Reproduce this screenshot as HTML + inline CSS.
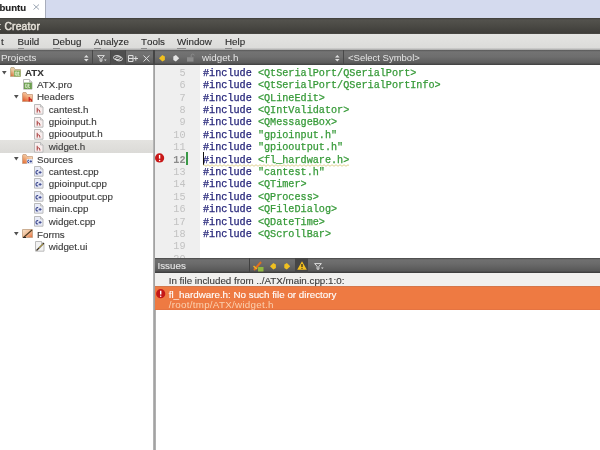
<!DOCTYPE html><html><head><meta charset="utf-8"><style>
*{margin:0;padding:0;box-sizing:border-box}
html,body{width:600px;height:450px;overflow:hidden;background:#fff;font-family:"Liberation Sans",sans-serif}
.a{position:absolute;white-space:pre}
body{will-change:transform}
svg{position:absolute;overflow:visible}
.mi{font-size:9.8px;color:#2c2c2c;top:36.3px;-webkit-text-stroke:0.12px #2c2c2c}
.mi u{text-decoration:none;position:relative}
.mi u:after{content:"";position:absolute;left:0;right:0;top:11.6px;height:1px;background:#8a8a8a}
.tr{font-size:9.8px;color:#3a3a3a;-webkit-text-stroke:0.12px #3a3a3a}
.code{font-family:"Liberation Mono",monospace;font-size:10.17px;-webkit-text-stroke:0.25px}
.ln{font-family:"Liberation Mono",monospace;font-size:10.17px;color:#c2c2c2;text-align:right;width:30.5px;left:0;top:2.7px;line-height:12.4px}
#code{left:48px;top:2.7px;line-height:12.4px}
.cur{color:#8c8c8c;font-weight:bold}
.kw{color:#25257a}
.st{color:#369a38}
.sep{position:absolute;width:1px;background:#4c4c4c;border-right:1px solid #7a7a7a}
</style></head><body>
<div class="a" style="left:0;top:0;width:600px;height:18px;background:#d4daee"></div>
<div class="a" style="left:0;top:0;width:45px;height:18px;background:#fff"></div>
<div class="a" style="left:45px;top:0;width:1.2px;height:18px;background:#a8adbb"></div>
<div class="a" style="left:-0.5px;top:2.2px;font-size:9.6px;font-weight:bold;color:#222;-webkit-text-stroke:0.15px #222">buntu</div>
<svg style="left:33px;top:4.3px" width="7" height="6"><path d="M0.5 0.5L6 5.5M6 0.5L0.5 5.5" stroke="#98a2b0" stroke-width="0.95"/></svg>
<div class="a" style="left:0;top:18px;width:600px;height:16px;background:linear-gradient(#3e3d39,#53524d 12%,#4a4944 50%,#3e3d39 95%,#55544f)"></div>
<div class="a" style="left:-2.6px;top:20.8px;font-size:10px;font-weight:bold;color:#e2ded6">t</div>
<div class="a" style="left:4.4px;top:20.8px;font-size:10.3px;letter-spacing:0.2px;color:#e6e2da;-webkit-text-stroke:0.45px #e6e2da">Creator</div>
<div class="a" style="left:0;top:34px;width:600px;height:16px;background:linear-gradient(#e4e4e2,#dcdcda 85%,#a8a8a8)"></div>
<div class="a mi" style="left:1px">t</div>
<div class="a mi" style="left:17.5px"><u>B</u>uild</div>
<div class="a mi" style="left:52.5px"><u>D</u>ebug</div>
<div class="a mi" style="left:94px"><u>A</u>nalyze</div>
<div class="a mi" style="left:141px"><u>T</u>ools</div>
<div class="a mi" style="left:177px"><u>W</u>indow</div>
<div class="a mi" style="left:225px"><u>H</u>elp</div>
<div class="a" style="left:0;top:50px;width:600px;height:15px;background:linear-gradient(#585858,#737373 12%,#6e6e6e 45%,#5c5c5c 85%,#3e3e3e)"></div>
<div class="a" style="left:1px;top:52.3px;font-size:9.8px;color:#e6e6e6">Projects</div>
<svg style="left:84px;top:54.8px" width="5" height="7"><path d="M2.3 0L4.6 2.4H0Z M2.3 6.4L4.6 4H0Z" fill="#e0e0e0"/></svg>
<div class="a" style="left:92px;top:50px;width:1px;height:15px;background:#484848"></div>
<div class="a" style="left:110px;top:50px;width:1px;height:15px;background:#484848"></div>
<div class="a" style="left:124.5px;top:50px;width:1px;height:15px;background:#484848"></div>
<div class="a" style="left:110.5px;top:50px;width:14px;height:15px;background:#4f4f4f"></div>
<svg style="left:96.5px;top:55px" width="10" height="7"><path d="M0.6 0.6H7.4L4.9 3.3V6.2H3.1V3.3Z" fill="none" stroke="#dedede" stroke-width="1"/><path d="M7 4.6H9.6L8.3 6Z" fill="#dedede"/></svg>
<svg style="left:113px;top:55.3px" width="10" height="7"><ellipse cx="4" cy="2.6" rx="3.5" ry="2.1" fill="none" stroke="#dedede" stroke-width="1"/><ellipse cx="6" cy="3.8" rx="3.4" ry="2.1" fill="none" stroke="#dedede" stroke-width="1"/></svg>
<svg style="left:127.5px;top:55.3px" width="10" height="7"><path d="M0.5 0.5H5V6.5H0.5Z M0.5 3.5H5" fill="none" stroke="#dedede" stroke-width="1"/><path d="M5.5 3.5H10 M7.8 1.3V5.7" stroke="#dedede" stroke-width="1"/></svg>
<svg style="left:143px;top:55.3px" width="7" height="7"><path d="M0.5 0.5L6.3 6.5M6.3 0.5L0.5 6.5" stroke="#dedede" stroke-width="1"/></svg>
<div class="a" style="left:153.4px;top:50px;width:1.3px;height:15px;background:#444"></div>
<svg style="left:158.6px;top:54.8px" width="7" height="7"><path d="M0 3.2L3.3 0L5.9 1.5V4.9L3.3 6.4Z" fill="#f0c020"/></svg>
<svg style="left:173px;top:54.8px" width="7" height="7"><path d="M6.2 3.2L2.9 0L0.3 1.5V4.9L2.9 6.4Z" fill="#e4e4e4"/></svg>
<svg style="left:187px;top:54.4px" width="8" height="8"><rect x="0" y="3.2" width="6.5" height="4.4" fill="#8c8c8c"/><path d="M4.2 3.2V1.8A1.5 1.5 0 0 1 7.2 1.4" fill="none" stroke="#8c8c8c" stroke-width="1"/></svg>
<div class="a" style="left:202px;top:52.3px;font-size:9.8px;color:#e6e6e6">widget.h</div>
<svg style="left:334.8px;top:54.9px" width="5" height="7"><path d="M2.3 0L4.6 2.4H0Z M2.3 6.4L4.6 4H0Z" fill="#e0e0e0"/></svg>
<div class="a" style="left:343px;top:50px;width:1px;height:15px;background:#484848"></div>
<div class="a" style="left:348px;top:52.3px;font-size:9.5px;color:#e6e6e6">&lt;Select Symbol&gt;</div>
<div class="a" style="left:0;top:140px;width:153px;height:12.6px;background:linear-gradient(#e4e3e0,#dbdad7)"></div>
<div class="a" style="left:153px;top:65px;width:2.5px;height:385px;background:linear-gradient(90deg,#bdbdbd,#a2a2a2 50%,#b8b8b8)"></div>
<svg style="left:2.2px;top:70.5px" width="5" height="4"><path d="M0 0H4.6L2.3 3.6Z" fill="#505050"/></svg>
<svg style="left:10.3px;top:67.3px" width="11" height="10" viewBox="0 0 11 10"><defs><linearGradient id="fq" x1="0" y1="1" x2="1" y2="0"><stop offset="0" stop-color="#d0622a"/><stop offset="0.45" stop-color="#e9c9a0"/><stop offset="1" stop-color="#e2d6bf"/></linearGradient></defs><path d="M0.5 1.5V9.5H10.5V2.5H5L4 0.5H1Z" fill="url(#fq)" stroke="#b8a888" stroke-width="0.8"/><rect x="4" y="3.5" width="6.5" height="6" fill="#82ae5c"/><path d="M5.3 5H7V8H5.3Z M6.5 8L7.3 8.8 M8.3 4.6V8.4H9.6 M7.6 5.8H9.4" fill="none" stroke="#e4f2d4" stroke-width="0.8"/></svg>
<div class="a tr" style="left:25px;top:66.5px;font-weight:bold;color:#333">ATX</div>
<svg style="left:23px;top:79.3px" width="10" height="11" viewBox="0 0 10 11"><path d="M0.5 0.5H6.5L9 3V10.2H0.5Z" fill="#ffffff" stroke="#b4b4b4" stroke-width="0.9"/><path d="M6.5 0.5V3H9" fill="#e0e0e0" stroke="#b0b0b0" stroke-width="0.7"/><rect x="1" y="3.6" width="7.9" height="6.4" fill="#6c9e50"/><path d="M2.4 5.2H4.2V8.4H2.4Z M3.7 8.4L4.5 9.2 M5.6 4.8V8.6H7 M5 6H6.8" fill="none" stroke="#e0f0d0" stroke-width="0.8"/></svg>
<div class="a tr" style="left:37px;top:78.5px">ATX.pro</div>
<svg style="left:13.9px;top:95px" width="5" height="4"><path d="M0 0H4.6L2.3 3.6Z" fill="#505050"/></svg>
<svg style="left:22.3px;top:92px" width="11" height="10" viewBox="0 0 11 10"><defs><linearGradient id="fh" x1="0" y1="1" x2="0.7" y2="0"><stop offset="0" stop-color="#e04a1c"/><stop offset="0.55" stop-color="#f0a878"/><stop offset="1" stop-color="#f6dcc4"/></linearGradient></defs><path d="M0.5 1.5V9.5H10.5V2.5H5L4 0.5H1Z" fill="url(#fh)" stroke="#c89878" stroke-width="0.8"/><path d="M7.2 5V9.5 M7.2 7.5Q9.5 6 9.5 9.5" fill="none" stroke="#c81c1c" stroke-width="1.2"/></svg>
<div class="a tr" style="left:37px;top:91px">Headers</div>
<svg style="left:34.3px;top:104.3px" width="10" height="11" viewBox="0 0 10 11"><path d="M0.5 0.5H6.5L9 3V10.2H0.5Z" fill="#f8eeee" stroke="#b4b4b4" stroke-width="0.9"/><path d="M6.5 0.5V3H9" fill="#e0e0e0" stroke="#b0b0b0" stroke-width="0.7"/><path d="M3.2 3.8V8.6 M3.2 6.2Q5.9 4.8 5.9 8.6" fill="none" stroke="#a83a3a" stroke-width="1"/></svg>
<div class="a tr" style="left:48.7px;top:103.50px">cantest.h</div>
<svg style="left:34.3px;top:116.75px" width="10" height="11" viewBox="0 0 10 11"><path d="M0.5 0.5H6.5L9 3V10.2H0.5Z" fill="#f8eeee" stroke="#b4b4b4" stroke-width="0.9"/><path d="M6.5 0.5V3H9" fill="#e0e0e0" stroke="#b0b0b0" stroke-width="0.7"/><path d="M3.2 3.8V8.6 M3.2 6.2Q5.9 4.8 5.9 8.6" fill="none" stroke="#a83a3a" stroke-width="1"/></svg>
<div class="a tr" style="left:48.7px;top:115.95px">gpioinput.h</div>
<svg style="left:34.3px;top:129.20000000000002px" width="10" height="11" viewBox="0 0 10 11"><path d="M0.5 0.5H6.5L9 3V10.2H0.5Z" fill="#f8eeee" stroke="#b4b4b4" stroke-width="0.9"/><path d="M6.5 0.5V3H9" fill="#e0e0e0" stroke="#b0b0b0" stroke-width="0.7"/><path d="M3.2 3.8V8.6 M3.2 6.2Q5.9 4.8 5.9 8.6" fill="none" stroke="#a83a3a" stroke-width="1"/></svg>
<div class="a tr" style="left:48.7px;top:128.40px">gpiooutput.h</div>
<svg style="left:34.3px;top:141.65px" width="10" height="11" viewBox="0 0 10 11"><path d="M0.5 0.5H6.5L9 3V10.2H0.5Z" fill="#f8eeee" stroke="#b4b4b4" stroke-width="0.9"/><path d="M6.5 0.5V3H9" fill="#e0e0e0" stroke="#b0b0b0" stroke-width="0.7"/><path d="M3.2 3.8V8.6 M3.2 6.2Q5.9 4.8 5.9 8.6" fill="none" stroke="#a83a3a" stroke-width="1"/></svg>
<div class="a tr" style="left:48.7px;top:140.85px">widget.h</div>
<svg style="left:13.9px;top:157.3px" width="5" height="4"><path d="M0 0H4.6L2.3 3.6Z" fill="#505050"/></svg>
<svg style="left:22.3px;top:154.3px" width="11" height="10" viewBox="0 0 11 10"><defs><linearGradient id="fc" x1="0" y1="1" x2="0.7" y2="0"><stop offset="0" stop-color="#e2642c"/><stop offset="0.55" stop-color="#f0b080"/><stop offset="1" stop-color="#f6e0c8"/></linearGradient></defs><path d="M0.5 1.5V9.5H10.5V2.5H5L4 0.5H1Z" fill="url(#fc)" stroke="#c8a080" stroke-width="0.8"/><rect x="4.8" y="5" width="6" height="5" fill="#dfe4f2"/><path d="M7 6.2Q5.6 6 5.6 7.4Q5.6 8.9 7 8.6 M7.6 7.4H10 M8.8 6.3V8.5" fill="none" stroke="#2c3c8c" stroke-width="0.9"/></svg>
<div class="a tr" style="left:37px;top:153.5px">Sources</div>
<svg style="left:34.3px;top:165.70000000000002px" width="10" height="11" viewBox="0 0 10 11"><path d="M0.5 0.5H6.5L9 3V10.2H0.5Z" fill="#e8ebf7" stroke="#b4b4b4" stroke-width="0.9"/><path d="M6.5 0.5V3H9" fill="#e0e0e0" stroke="#b0b0b0" stroke-width="0.7"/><path d="M4.2 4.8Q2 4.2 2 6.2Q2 8.4 4.2 7.8" fill="none" stroke="#34408a" stroke-width="1.1"/><path d="M4.6 6.4H7.6 M6.1 5V7.8" stroke="#34408a" stroke-width="0.9"/></svg>
<div class="a tr" style="left:48.7px;top:165.80px">cantest.cpp</div>
<svg style="left:34.3px;top:178.15px" width="10" height="11" viewBox="0 0 10 11"><path d="M0.5 0.5H6.5L9 3V10.2H0.5Z" fill="#e8ebf7" stroke="#b4b4b4" stroke-width="0.9"/><path d="M6.5 0.5V3H9" fill="#e0e0e0" stroke="#b0b0b0" stroke-width="0.7"/><path d="M4.2 4.8Q2 4.2 2 6.2Q2 8.4 4.2 7.8" fill="none" stroke="#34408a" stroke-width="1.1"/><path d="M4.6 6.4H7.6 M6.1 5V7.8" stroke="#34408a" stroke-width="0.9"/></svg>
<div class="a tr" style="left:48.7px;top:178.25px">gpioinput.cpp</div>
<svg style="left:34.3px;top:190.60000000000002px" width="10" height="11" viewBox="0 0 10 11"><path d="M0.5 0.5H6.5L9 3V10.2H0.5Z" fill="#e8ebf7" stroke="#b4b4b4" stroke-width="0.9"/><path d="M6.5 0.5V3H9" fill="#e0e0e0" stroke="#b0b0b0" stroke-width="0.7"/><path d="M4.2 4.8Q2 4.2 2 6.2Q2 8.4 4.2 7.8" fill="none" stroke="#34408a" stroke-width="1.1"/><path d="M4.6 6.4H7.6 M6.1 5V7.8" stroke="#34408a" stroke-width="0.9"/></svg>
<div class="a tr" style="left:48.7px;top:190.70px">gpiooutput.cpp</div>
<svg style="left:34.3px;top:203.05px" width="10" height="11" viewBox="0 0 10 11"><path d="M0.5 0.5H6.5L9 3V10.2H0.5Z" fill="#e8ebf7" stroke="#b4b4b4" stroke-width="0.9"/><path d="M6.5 0.5V3H9" fill="#e0e0e0" stroke="#b0b0b0" stroke-width="0.7"/><path d="M4.2 4.8Q2 4.2 2 6.2Q2 8.4 4.2 7.8" fill="none" stroke="#34408a" stroke-width="1.1"/><path d="M4.6 6.4H7.6 M6.1 5V7.8" stroke="#34408a" stroke-width="0.9"/></svg>
<div class="a tr" style="left:48.7px;top:203.15px">main.cpp</div>
<svg style="left:34.3px;top:215.50000000000003px" width="10" height="11" viewBox="0 0 10 11"><path d="M0.5 0.5H6.5L9 3V10.2H0.5Z" fill="#e8ebf7" stroke="#b4b4b4" stroke-width="0.9"/><path d="M6.5 0.5V3H9" fill="#e0e0e0" stroke="#b0b0b0" stroke-width="0.7"/><path d="M4.2 4.8Q2 4.2 2 6.2Q2 8.4 4.2 7.8" fill="none" stroke="#34408a" stroke-width="1.1"/><path d="M4.6 6.4H7.6 M6.1 5V7.8" stroke="#34408a" stroke-width="0.9"/></svg>
<div class="a tr" style="left:48.7px;top:215.60px">widget.cpp</div>
<svg style="left:13.9px;top:231.5px" width="5" height="4"><path d="M0 0H4.6L2.3 3.6Z" fill="#505050"/></svg>
<svg style="left:22.3px;top:228.9px" width="11" height="10" viewBox="0 0 11 10"><defs><linearGradient id="fu" x1="0" y1="0" x2="1" y2="1"><stop offset="0" stop-color="#f6e4cc"/><stop offset="0.55" stop-color="#f0b890"/><stop offset="1" stop-color="#e46a38"/></linearGradient></defs><path d="M0.5 0.5V8.5H10.5V0.5Z" fill="url(#fu)" stroke="#c0a080" stroke-width="0.8"/><path d="M1.5 8.5L10 1" stroke="#4a3a20" stroke-width="1.1"/><path d="M1 8.5H4" stroke="#2a2a2a" stroke-width="1"/></svg>
<div class="a tr" style="left:37px;top:228.5px">Forms</div>
<svg style="left:34.6px;top:241px" width="10" height="11" viewBox="0 0 10 11"><path d="M0.5 0.5H6.5L9 3V10.2H0.5Z" fill="#f2f2f2" stroke="#b4b4b4" stroke-width="0.9"/><path d="M6.5 0.5V3H9" fill="#e0e0e0" stroke="#b0b0b0" stroke-width="0.7"/><path d="M1.5 9.5L9 2" stroke="#3a3020" stroke-width="1.3"/><path d="M4 7L8 3" stroke="#d8c040" stroke-width="0.7"/></svg>
<div class="a tr" style="left:48.7px;top:240.7px">widget.ui</div>
<div class="a" style="left:155px;top:65px;width:445px;height:193px;overflow:hidden">
<div class="a" style="left:0;top:0;width:45px;height:193px;background:#efefef"></div>
<div class="a ln"><div>5</div><div>6</div><div>7</div><div>8</div><div>9</div><div>10</div><div>11</div><div class="cur">12</div><div>13</div><div>14</div><div>15</div><div>16</div><div>17</div><div>18</div><div>19</div><div>20</div></div>
<div class="a code" id="code"><div><span class="kw">#include</span> <span class="st">&lt;QtSerialPort/QSerialPort&gt;</span></div><div><span class="kw">#include</span> <span class="st">&lt;QtSerialPort/QSerialPortInfo&gt;</span></div><div><span class="kw">#include</span> <span class="st">&lt;QLineEdit&gt;</span></div><div><span class="kw">#include</span> <span class="st">&lt;QIntValidator&gt;</span></div><div><span class="kw">#include</span> <span class="st">&lt;QMessageBox&gt;</span></div><div><span class="kw">#include</span> <span class="st">"gpioinput.h"</span></div><div><span class="kw">#include</span> <span class="st">"gpiooutput.h"</span></div><div><span class="kw">#include</span> <span class="st">&lt;fl_hardware.h&gt;</span></div><div><span class="kw">#include</span> <span class="st">"cantest.h"</span></div><div><span class="kw">#include</span> <span class="st">&lt;QTimer&gt;</span></div><div><span class="kw">#include</span> <span class="st">&lt;QProcess&gt;</span></div><div><span class="kw">#include</span> <span class="st">&lt;QFileDialog&gt;</span></div><div><span class="kw">#include</span> <span class="st">&lt;QDateTime&gt;</span></div><div><span class="kw">#include</span> <span class="st">&lt;QScrollBar&gt;</span></div><div>&nbsp;</div><div>&nbsp;</div></div>
<svg style="left:0;top:88px" width="10" height="10"><circle cx="4.6" cy="4.9" r="4.6" fill="#c81818"/><path d="M4.6 2V5.6" stroke="#fff" stroke-width="1.4"/><circle cx="4.6" cy="7.4" r="0.75" fill="#fff"/></svg>
<div class="a" style="left:31.3px;top:87.3px;width:1.7px;height:12.7px;background:#3a9a48"></div>
<div class="a" style="left:48px;top:87.3px;width:1px;height:12.7px;background:#111"></div>
<svg style="left:48px;top:98.5px" width="146" height="3"><path d="M0 1.5 Q1 0 2 1.5 Q3 3 4 1.5 Q5 0 6 1.5 Q7 3 8 1.5 Q9 0 10 1.5 Q11 3 12 1.5 Q13 0 14 1.5 Q15 3 16 1.5 Q17 0 18 1.5 Q19 3 20 1.5 Q21 0 22 1.5 Q23 3 24 1.5 Q25 0 26 1.5 Q27 3 28 1.5 Q29 0 30 1.5 Q31 3 32 1.5 Q33 0 34 1.5 Q35 3 36 1.5 Q37 0 38 1.5 Q39 3 40 1.5 Q41 0 42 1.5 Q43 3 44 1.5 Q45 0 46 1.5 Q47 3 48 1.5 Q49 0 50 1.5 Q51 3 52 1.5 Q53 0 54 1.5 Q55 3 56 1.5 Q57 0 58 1.5 Q59 3 60 1.5 Q61 0 62 1.5 Q63 3 64 1.5 Q65 0 66 1.5 Q67 3 68 1.5 Q69 0 70 1.5 Q71 3 72 1.5 Q73 0 74 1.5 Q75 3 76 1.5 Q77 0 78 1.5 Q79 3 80 1.5 Q81 0 82 1.5 Q83 3 84 1.5 Q85 0 86 1.5 Q87 3 88 1.5 Q89 0 90 1.5 Q91 3 92 1.5 Q93 0 94 1.5 Q95 3 96 1.5 Q97 0 98 1.5 Q99 3 100 1.5 Q101 0 102 1.5 Q103 3 104 1.5 Q105 0 106 1.5 Q107 3 108 1.5 Q109 0 110 1.5 Q111 3 112 1.5 Q113 0 114 1.5 Q115 3 116 1.5 Q117 0 118 1.5 Q119 3 120 1.5 Q121 0 122 1.5 Q123 3 124 1.5 Q125 0 126 1.5 Q127 3 128 1.5 Q129 0 130 1.5 Q131 3 132 1.5 Q133 0 134 1.5 Q135 3 136 1.5 Q137 0 138 1.5 Q139 3 140 1.5 Q141 0 142 1.5 Q143 3 144 1.5 Q145 0 146 1.5" fill="none" stroke="#d8c878" stroke-width="0.8"/></svg>
</div>
<div class="a" style="left:155px;top:258px;width:445px;height:15px;background:linear-gradient(#444,#707070 12%,#6a6a6a 40%,#585858 85%,#383838)"></div>
<div class="a" style="left:157.5px;top:260.3px;font-size:9.8px;color:#e2e2e2;-webkit-text-stroke:0.15px #e2e2e2">Issues</div>
<div class="a" style="left:248.5px;top:258px;width:1px;height:15px;background:#404040"></div>
<div class="a" style="left:294.5px;top:258px;width:13.5px;height:15px;background:#464646"></div>
<svg style="left:253px;top:260.5px" width="11" height="11"><path d="M1 9L8 1" stroke="#e07020" stroke-width="2"/><path d="M0.5 5L4 8" stroke="#f0b020" stroke-width="1.5"/><rect x="5" y="6" width="5.5" height="4.5" fill="#90b840"/></svg>
<svg style="left:270px;top:263.3px" width="7" height="7"><path d="M0 3.2L3.3 0L5.9 1.5V4.9L3.3 6.4Z" fill="#f0c020"/></svg>
<svg style="left:283.5px;top:263.3px" width="7" height="7"><path d="M6.2 3.2L2.9 0L0.3 1.5V4.9L2.9 6.4Z" fill="#f0c020"/></svg>
<svg style="left:296.5px;top:260.8px" width="10" height="9"><path d="M5 0.3L9.8 8.7H0.2Z" fill="#f4c020"/><path d="M5 3V6" stroke="#222" stroke-width="1.2"/><circle cx="5" cy="7.3" r="0.6" fill="#222"/></svg>
<svg style="left:314px;top:263px" width="10" height="7"><path d="M0.6 0.6H7.4L4.9 3.3V6.2H3.1V3.3Z" fill="none" stroke="#dedede" stroke-width="1"/><path d="M7 4.6H9.6L8.3 6Z" fill="#dedede"/></svg>
<div class="a" style="left:155px;top:273px;width:445px;height:13.5px;background:#f1f0ee"></div>
<div class="a" style="left:168.7px;top:274.5px;font-size:9.8px;color:#3a3a3a;-webkit-text-stroke:0.12px #3a3a3a">In file included from ../ATX/main.cpp:1:0:</div>
<div class="a" style="left:155px;top:286.4px;width:445px;height:23.3px;background:linear-gradient(#c8744e,#ee7a42 6%,#ee7a42 94%,#e07040)"></div>
<svg style="left:156px;top:289px" width="10" height="10"><circle cx="4.7" cy="4.7" r="4.6" fill="#c41818"/><path d="M4.7 1.8V5.4" stroke="#fff" stroke-width="1.4"/><circle cx="4.7" cy="7.2" r="0.75" fill="#fff"/></svg>
<div class="a" style="left:168.7px;top:288.6px;font-size:9.8px;color:#fff;-webkit-text-stroke:0.12px #fff">fl_hardware.h: No such file or directory</div>
<div class="a" style="left:168.7px;top:299.1px;font-size:9.8px;letter-spacing:0.28px;color:#fad0b0">/root/tmp/ATX/widget.h</div>
</body></html>
